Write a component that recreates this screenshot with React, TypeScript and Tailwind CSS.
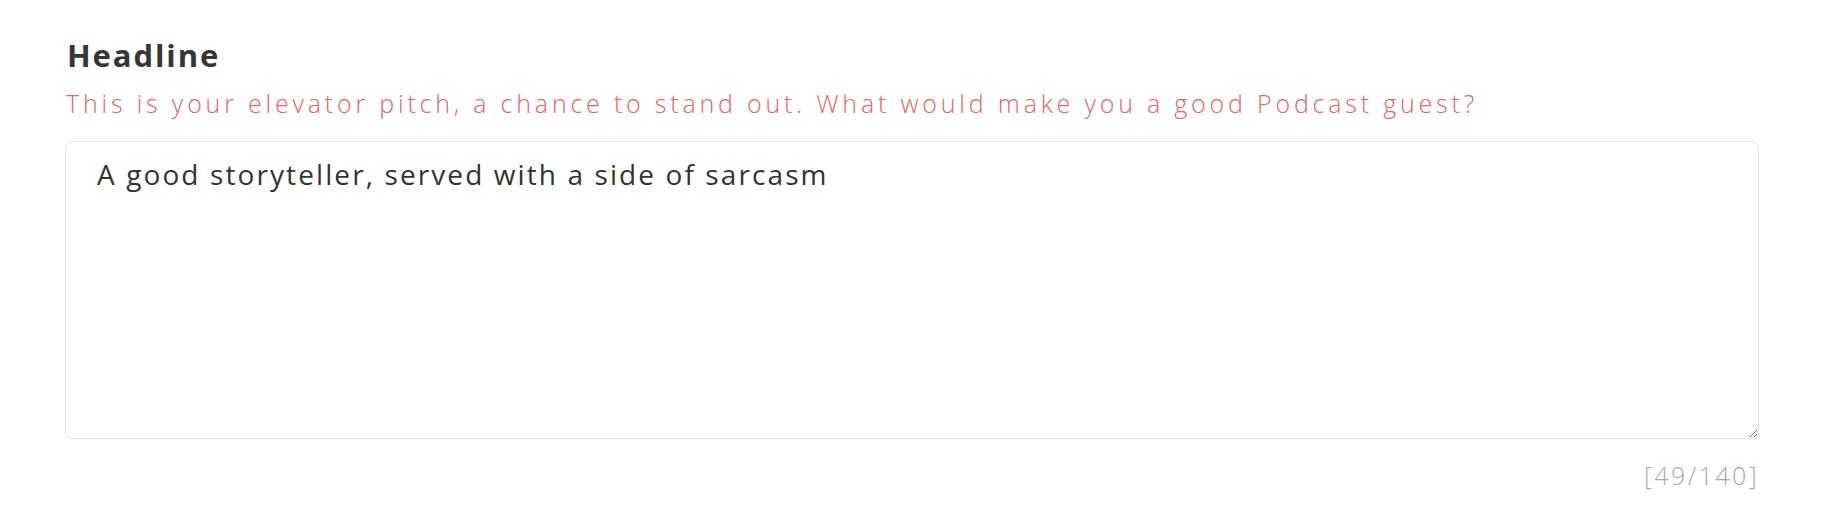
import { useState } from 'react';

const MAX = 140;

export default function App() {
    const [headline, setHeadline] = useState('A good storyteller, served with a side of sarcasm');

    return (
        <div className="min-h-screen bg-white font-['Open_Sans',sans-serif]">
            <div className="pl-[65px] pr-[79px] pt-[36px]">
                <h2 className="pl-[2px] text-[31px] leading-[38px] font-bold text-[#363636] tracking-[1.9px]">Headline</h2>
                <p className="mt-[13px] pl-[1px] text-[25px] leading-[32px] font-light text-[#e0665f] tracking-[3.8px]">
                    This is your elevator pitch, a chance to stand out. What would make you a good Podcast guest?
                </p>
                <textarea
                    className="mt-[22px] block w-full h-[298px] rounded-[6px] border border-[#e6e6e6] pl-[31px] pr-[31px] pt-[14px] text-[28px] leading-[36px] text-[#333333] tracking-[2.1px] outline-none"
                    value={headline}
                    maxLength={MAX}
                    onChange={(e) => setHeadline(e.target.value)}
                />
                <div className="mt-[21px] text-right text-[25px] leading-[30px] font-light text-[#a8a8a8] tracking-[2.4px]">
                    [{headline.length}/{MAX}]
                </div>
            </div>
        </div>
    );
}
